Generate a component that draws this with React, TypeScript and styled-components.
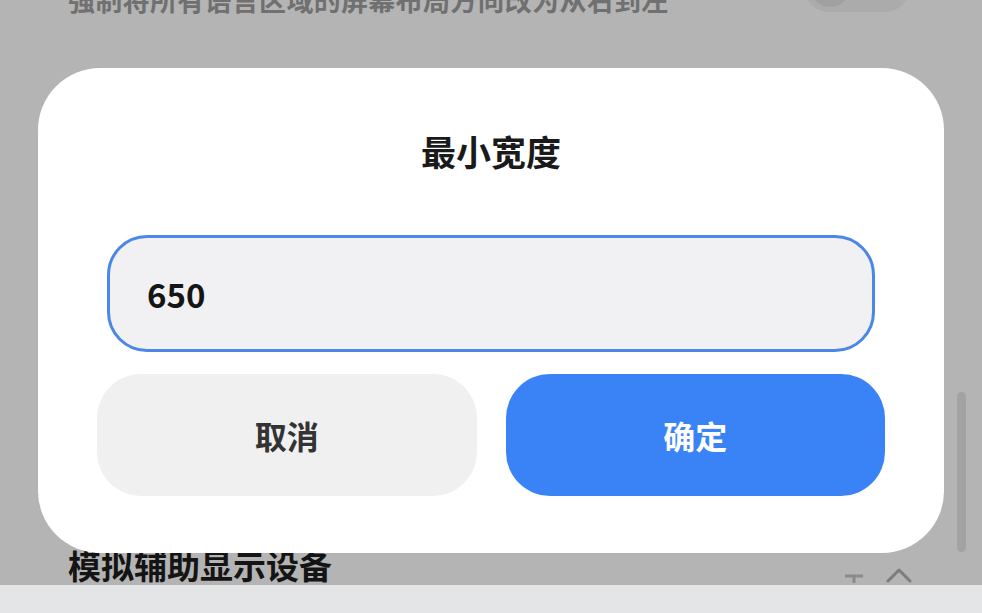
import React, { FunctionComponent, useState } from "react"
import styled, { createGlobalStyle } from "styled-components"

const GlobalStyle = createGlobalStyle`
  html, body {
    margin: 0;
    padding: 0;
    background: #b4b4b4;
  }
  body {
    font-family: "Noto Sans CJK SC", "Noto Sans", sans-serif;
  }
  * { box-sizing: border-box; }
`

const Screen = styled.div`
  width: 982px;
  height: 613px;
  display: flex;
  flex-direction: column;
  overflow: hidden;
`
const Page = styled.div`
  position: relative;
  flex: 1;
  background: #b4b4b4;
  overflow: hidden;
  display: flex;
  flex-direction: column;
  justify-content: space-between;
`
// row scrolled partly out of view at the top
const TopRow = styled.div`
  display: flex;
  align-items: flex-start;
  justify-content: space-between;
  padding: 0 72px 0 68px;
  margin-top: -38px;
`
const Description = styled.div`
  margin-top: 18px;
  font-size: 27px;
  line-height: 40px;
  font-weight: 700;
  color: #707070;
  letter-spacing: 0.3px;
`
const Toggle = styled.div`
  width: 106px;
  height: 50px;
  border-radius: 25px;
  background: #ababab;
  display: flex;
  align-items: center;
  padding-left: 6px;
`
const Knob = styled.div`
  width: 40px;
  height: 40px;
  border-radius: 50%;
  background: #a0a0a0;
`
const SectionRow = styled.div`
  display: flex;
  align-items: flex-end;
  justify-content: space-between;
  padding: 0 68px 0 68px;
  margin-bottom: 2px;
`
const SectionTitle = styled.div`
  font-size: 33px;
  line-height: 36px;
  font-weight: 700;
  color: #141414;
`
const RowIcons = styled.div`
  display: flex;
  align-items: flex-end;
  gap: 22px;
  margin-right: 2px;
`
const Scrollbar = styled.div`
  position: absolute;
  left: 957px;
  top: 392px;
  width: 9px;
  height: 160px;
  border-radius: 5px;
  background: #a2a2a2;
`
const Dialog = styled.div`
  position: absolute;
  left: 38px;
  top: 68px;
  width: 906px;
  height: 485px;
  background: #ffffff;
  border-radius: 62px;
  padding: 60px 59px 57px;
  display: flex;
  flex-direction: column;
`
const DialogTitle = styled.div`
  text-align: center;
  font-size: 35px;
  line-height: 46px;
  font-weight: 700;
  color: #1a1a1a;
  margin-bottom: 61px;
`
const Field = styled.input`
  display: block;
  margin: 0 10px;
  height: 117px;
  width: calc(100% - 20px);
  border: 3px solid #4b87e6;
  border-radius: 40px;
  background: #f1f0f2;
  padding: 0 37px;
  font-family: "Noto Sans CJK SC", "Noto Sans", sans-serif;
  font-size: 33px;
  font-weight: 700;
  color: #151515;
  outline: none;
`
const ButtonRow = styled.div`
  display: grid;
  grid-template-columns: 1fr 1fr;
  gap: 29px;
  margin-top: 22px;
`
const ActionButton = styled.button<{ primary?: boolean }>`
  height: 122px;
  border: none;
  border-radius: 44px;
  background: ${p => (p.primary ? "#3a83f6" : "#f0f0f0")};
  color: ${p => (p.primary ? "#ffffff" : "#333333")};
  font-family: "Noto Sans CJK SC", "Noto Sans", sans-serif;
  font-size: 32px;
  font-weight: 700;
  cursor: pointer;
`
const NavBar = styled.div`
  height: 28px;
  background: #e3e5e7;
`

const App: FunctionComponent = () => {
  const [value, setValue] = useState("650")

  return (
    <>
      <GlobalStyle />
      <Screen>
        <Page>
          <TopRow>
            <Description>强制将所有语言区域的屏幕布局方向改为从右到左</Description>
            <Toggle>
              <Knob />
            </Toggle>
          </TopRow>
          <SectionRow>
            <SectionTitle>模拟辅助显示设备</SectionTitle>
            <RowIcons>
              <svg width="20" height="10" viewBox="0 0 20 10">
                <path d="M1 3 H19 M10 3 V10" stroke="#8a8a8a" strokeWidth="3" fill="none" />
              </svg>
              <svg width="26" height="16" viewBox="0 0 26 16">
                <path d="M2 14 L13 3 L24 14" stroke="#7c7c7c" strokeWidth="3" fill="none" strokeLinecap="round" strokeLinejoin="round" />
              </svg>
            </RowIcons>
          </SectionRow>
          <Scrollbar />
          <Dialog>
            <DialogTitle>最小宽度</DialogTitle>
            <Field value={value} onChange={e => setValue(e.target.value)} />
            <ButtonRow>
              <ActionButton>取消</ActionButton>
              <ActionButton primary>确定</ActionButton>
            </ButtonRow>
          </Dialog>
        </Page>
        <NavBar />
      </Screen>
    </>
  )
}

export default App
